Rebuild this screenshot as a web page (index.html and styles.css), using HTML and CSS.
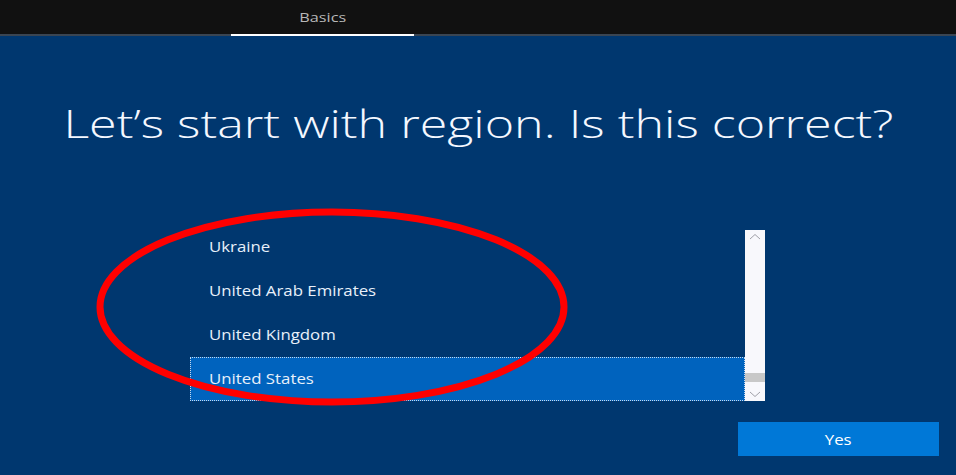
FILE: index.html
```html
<!DOCTYPE HTML>
<html lang="en">
<head>
	<title>Basics</title>
	<meta charset="utf-8">
	<link rel="stylesheet" href="styles.css">
</head>
<body>
	<div class="topbar">
		<div class="tab"><span class="wide">Basics</span></div>
	</div>

	<h1 class="question"><span class="wide">Let’s start with region. Is this correct?</span></h1>

	<div class="picker">
		<ul class="regions">
			<li><span class="wide">Ukraine</span></li>
			<li><span class="wide">United Arab Emirates</span></li>
			<li><span class="wide">United Kingdom</span></li>
			<li class="selected"><span class="wide">United States</span></li>
		</ul>
		<div class="scrollbar">
			<svg class="arrow" width="12" height="8" viewBox="0 0 12 8"><path d="M1 6 L6 1.5 L11 6" fill="none" stroke="#a0a0a8" stroke-width="1"/></svg>
			<div class="track"><div class="thumb"></div></div>
			<svg class="arrow" width="12" height="8" viewBox="0 0 12 8"><path d="M1 2 L6 6.5 L11 2" fill="none" stroke="#a0a0a8" stroke-width="1"/></svg>
		</div>
	</div>

	<div class="actions">
		<button class="yes"><span class="wide">Yes</span></button>
	</div>

	<!-- red annotation ring drawn over the list -->
	<svg class="ring" width="956" height="475" viewBox="0 0 956 475">
		<ellipse cx="332" cy="307" rx="232" ry="95" fill="none" stroke="#ff0000" stroke-width="7"/>
	</svg>
</body>
</html>
```

FILE: styles.css
```css
html {
	height: 100%;
}

body {
	margin: 0;
	padding: 0;
	background: #00376f;
	color: #ffffff;
	font-family: "Open Sans", sans-serif;
	height: 100%;
	position: relative;
	overflow: hidden;
}

/* the capture is stretched sideways, so text is widened to match */
.wide {
	display: inline-block;
	transform: scaleX(1.2);
	transform-origin: center;
}

.topbar {
	height: 34px;
	background: #111111;
	border-bottom: 2px solid #3a4552;
	display: flex;
	padding-left: 231px;
}

.tab {
	width: 183px;
	height: 34px;
	border-bottom: 2px solid #ffffff;
	margin-bottom: -2px;
	text-align: center;
	line-height: 34px;
	font-size: 13px;
	color: #b8b8b8;
}

.tab .wide {
	transform: scaleX(1.25);
}

.question {
	margin: 61px 0 0 0;
	text-align: center;
	font-weight: 300;
	font-size: 38px;
	line-height: 52px;
	color: #f4f8ff;
}

.question .wide {
	transform: scaleX(1.32);
}

.picker {
	display: flex;
	margin: 81px 0 0 190px;
	width: 575px;
	height: 171px;
}

.regions {
	list-style: none;
	margin: 0;
	padding: 0;
	flex: 1;
	display: flex;
	flex-direction: column;
	justify-content: flex-end;
}

.regions li {
	height: 44px;
	line-height: 44px;
	padding-left: 19px;
	font-size: 14px;
	color: #e8f0fa;
	box-sizing: border-box;
}

.regions li .wide {
	transform-origin: left center;
}

.regions li.selected {
	background: #0063be;
	border: 1px dotted #c8d8ec;
	padding-left: 18px;
	line-height: 42px;
}

.scrollbar {
	width: 20px;
	background: #f8f8fc;
	display: flex;
	flex-direction: column;
	align-items: center;
	padding: 3px 0;
	box-sizing: border-box;
}

.arrow {
	display: block;
}

.track {
	flex: 1;
	width: 100%;
	display: flex;
	flex-direction: column;
	justify-content: flex-end;
	padding-bottom: 8px;
}

.thumb {
	height: 9px;
	background: #c8c8c8;
}

.actions {
	display: flex;
	justify-content: flex-end;
	padding: 21px 17px 0 0;
}

.yes {
	width: 201px;
	height: 34px;
	border: none;
	background: #0078d7;
	color: #ffffff;
	font-family: "Open Sans", sans-serif;
	font-size: 14px;
}

.ring {
	position: absolute;
	left: 0;
	top: 0;
	pointer-events: none;
}
```
